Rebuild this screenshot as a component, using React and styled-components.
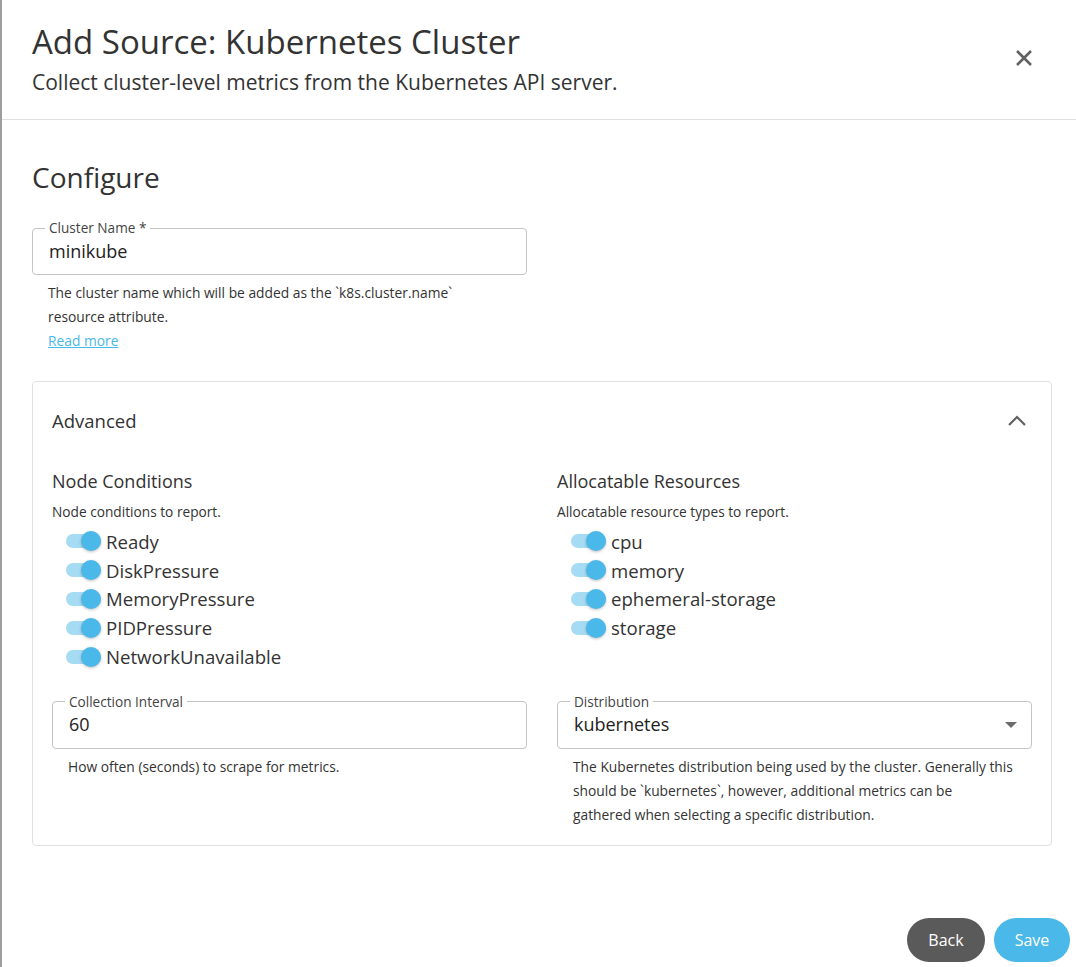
import React from "react";
import styled, { createGlobalStyle } from "styled-components";

const GlobalStyle = createGlobalStyle`
  html, body {
    margin: 0;
    padding: 0;
    background: #ffffff;
  }
  body {
    font-family: "Open Sans", "Noto Sans", sans-serif;
    color: #333333;
  }
`;

const Dialog = styled.div`
  width: 1076px;
  height: 967px;
  box-sizing: border-box;
  border-left: 2px solid #9e9e9e;
  display: flex;
  flex-direction: column;
  overflow: hidden;
`;

const Header = styled.div`
  display: flex;
  align-items: center;
  justify-content: space-between;
  padding: 22px 40px 21px 30px;
  border-bottom: 1px solid #e0e0e0;
`;

const Title = styled.h1`
  margin: 0;
  font-size: 33px;
  font-weight: 500;
  line-height: 40px;
  color: #333;
`;

const Subtitle = styled.p`
  margin: 4px 0 0;
  font-size: 21px;
  line-height: 32px;
  color: #333;
`;

const CloseButton = styled.button`
  border: none;
  background: none;
  padding: 0;
  width: 24px;
  height: 24px;
  margin-top: -4px;
  cursor: pointer;
  color: #616161;
  display: flex;
  align-items: center;
  justify-content: center;
`;

const Body = styled.div`
  flex: 1;
  padding: 36px 24px 0 30px;
`;

const SectionTitle = styled.h2`
  margin: 0 0 23px;
  font-size: 28px;
  font-weight: 500;
  line-height: 42px;
  color: #333;
`;

const FieldWrap = styled.div`
  width: ${(p) => p.width || "100%"};
`;

const Fieldset = styled.fieldset`
  margin: 0;
  position: relative;
  box-sizing: border-box;
  height: 54px;
  border: 1px solid #c4c4c4;
  border-radius: 4px;
  padding: 0 16px;
  display: flex;
  align-items: center;
  justify-content: space-between;
  min-width: 0;
`;

const Legend = styled.legend`
  font-size: 13.6px;
  color: #444;
  padding: 0 4px;
  margin-left: -4px;
  line-height: 14px;
`;

const FieldValue = styled.span`
  font-size: 18px;
  color: #222;
  margin-top: -8px;
`;

const Caret = styled.span`
  width: 0;
  height: 0;
  border-left: 6px solid transparent;
  border-right: 6px solid transparent;
  border-top: 6px solid #6b6b6b;
  margin-top: -6px;
  margin-right: -2px;
`;

const Helper = styled.p`
  margin: 6px 0 0;
  padding: 0 16px;
  font-size: 13.8px;
  line-height: 24px;
  color: #333;
  white-space: nowrap;
`;

const Link = styled.a`
  display: block;
  padding: 0 16px;
  font-size: 13.8px;
  line-height: 24px;
  color: #4ab8e8;
  text-decoration: underline;
`;

const Card = styled.div`
  margin-top: 28px;
  border: 1px solid #e0e0e0;
  border-radius: 4px;
  padding: 26px 20px 18px 19px;
`;

const CardHeader = styled.div`
  display: flex;
  align-items: center;
  justify-content: space-between;
  margin-bottom: 36px;
`;

const CardTitle = styled.span`
  font-size: 18.5px;
  color: #333;
`;

const Grid = styled.div`
  display: grid;
  grid-template-columns: 475px 475px;
  column-gap: 30px;
  row-gap: 24px;
`;

const Column = styled.div``;

const ColumnTitle = styled.h3`
  margin: 0;
  font-size: 18px;
  font-weight: 400;
  line-height: 24px;
  color: #333;
`;

const ColumnDesc = styled.p`
  margin: 9px 0 5px;
  font-size: 13.7px;
  line-height: 20px;
  color: #333;
`;

const SwitchList = styled.div`
  display: flex;
  flex-direction: column;
  padding-left: 14px;
`;

const SwitchRow = styled.label`
  display: flex;
  align-items: center;
  height: 28.8px;
  font-size: 18.6px;
  color: #333;
`;

const Track = styled.span`
  position: relative;
  width: 35px;
  height: 14px;
  border-radius: 7px;
  background: #a5dbf3;
  margin-right: 5px;
`;

const Thumb = styled.span`
  position: absolute;
  top: -3px;
  right: 0;
  width: 20px;
  height: 20px;
  border-radius: 50%;
  background: #4ab8e8;
  box-shadow: 0 1px 3px rgba(0, 0, 0, 0.25);
`;

const Footer = styled.div`
  display: flex;
  justify-content: flex-end;
  gap: 9px;
  padding: 0 6px 5px 0;
`;

const Button = styled.button`
  border: none;
  border-radius: 22px;
  height: 44px;
  min-width: ${(p) => (p.$primary ? "76px" : "78px")};
  padding: 0 16px;
  font-family: "Open Sans", "Noto Sans", sans-serif;
  font-size: 16px;
  color: #fff;
  background: ${(p) => (p.$primary ? "#4ab8e8" : "#5a5a5a")};
  cursor: pointer;
`;

function Switch({ label }) {
  return (
    <SwitchRow>
      <Track>
        <Thumb />
      </Track>
      {label}
    </SwitchRow>
  );
}

const nodeConditions = ["Ready", "DiskPressure", "MemoryPressure", "PIDPressure", "NetworkUnavailable"];
const resources = ["cpu", "memory", "ephemeral-storage", "storage"];

export default function App() {
  return (
    <>
      <GlobalStyle />
      <Dialog>
        <Header>
          <div>
            <Title>Add Source: Kubernetes Cluster</Title>
            <Subtitle>Collect cluster-level metrics from the Kubernetes API server.</Subtitle>
          </div>
          <CloseButton aria-label="close">
            <svg width="20" height="20" viewBox="0 0 20 20">
              <path d="M3 3 L17 17 M17 3 L3 17" stroke="#616161" strokeWidth="2.6" />
            </svg>
          </CloseButton>
        </Header>

        <Body>
          <SectionTitle>Configure</SectionTitle>

          <FieldWrap width="495px">
            <Fieldset>
              <Legend>Cluster Name *</Legend>
              <FieldValue>minikube</FieldValue>
            </Fieldset>
            <Helper>
              The cluster name which will be added as the `k8s.cluster.name`
              <br />
              resource attribute.
            </Helper>
            <Link href="#">Read more</Link>
          </FieldWrap>

          <Card>
            <CardHeader>
              <CardTitle>Advanced</CardTitle>
              <svg width="20" height="12" viewBox="0 0 20 12" style={{ marginRight: 4 }}>
                <path d="M2 10 L10 2 L18 10" stroke="#616161" strokeWidth="2.2" fill="none" />
              </svg>
            </CardHeader>

            <Grid>
              <Column>
                <ColumnTitle>Node Conditions</ColumnTitle>
                <ColumnDesc>Node conditions to report.</ColumnDesc>
                <SwitchList>
                  {nodeConditions.map((c) => (
                    <Switch key={c} label={c} />
                  ))}
                </SwitchList>
              </Column>
              <Column>
                <ColumnTitle>Allocatable Resources</ColumnTitle>
                <ColumnDesc>Allocatable resource types to report.</ColumnDesc>
                <SwitchList>
                  {resources.map((c) => (
                    <Switch key={c} label={c} />
                  ))}
                </SwitchList>
              </Column>

              <FieldWrap>
                <Fieldset>
                  <Legend>Collection Interval</Legend>
                  <FieldValue>60</FieldValue>
                </Fieldset>
                <Helper>How often (seconds) to scrape for metrics.</Helper>
              </FieldWrap>
              <FieldWrap>
                <Fieldset>
                  <Legend>Distribution</Legend>
                  <FieldValue>kubernetes</FieldValue>
                  <Caret />
                </Fieldset>
                <Helper>
                  The Kubernetes distribution being used by the cluster. Generally this
                  <br />
                  should be `kubernetes`, however, additional metrics can be
                  <br />
                  gathered when selecting a specific distribution.
                </Helper>
              </FieldWrap>
            </Grid>
          </Card>
        </Body>

        <Footer>
          <Button>Back</Button>
          <Button $primary>Save</Button>
        </Footer>
      </Dialog>
    </>
  );
}
